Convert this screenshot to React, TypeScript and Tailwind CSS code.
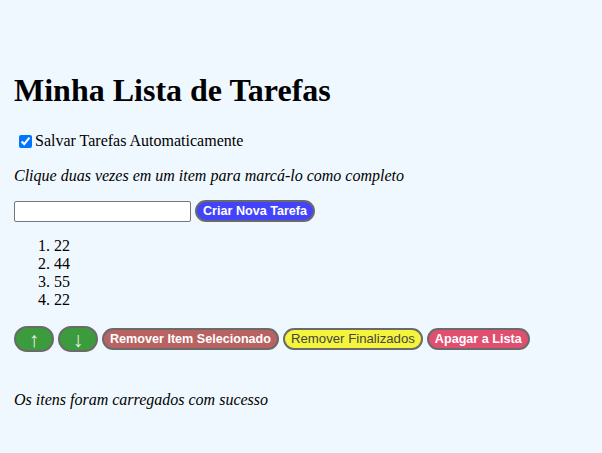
import { useState } from "react";

const items = ["22", "44", "55", "22"];

const btn =
  "rounded-full border-2 border-[#6a6a6a] font-['Liberation_Sans',Arial,sans-serif] leading-none";

export default function App() {
  const [autoSave, setAutoSave] = useState(true);

  return (
    <div className="min-h-[453px] bg-[#f0f8ff] px-[14px] pt-[72px] font-['Liberation_Serif','Times_New_Roman',serif] text-[16px] text-black">
      <h1 className="text-[32px] font-bold leading-[37px]">Minha Lista de Tarefas</h1>

      <label className="mt-[23px] flex items-center gap-[3px] pl-[5px] leading-[18px]">
        <input
          type="checkbox"
          checked={autoSave}
          onChange={(e) => setAutoSave(e.target.checked)}
          className="h-[13px] w-[13px] accent-[#0075ff]"
        />
        <span>Salvar Tarefas Automaticamente</span>
      </label>

      <p className="mt-[17px] italic leading-[18px]">
        Clique duas vezes em um item para marcá-lo como completo
      </p>

      <div className="mt-[15px] flex items-center gap-[4px]">
        <input
          type="text"
          className="h-[21px] w-[177px] rounded-[2px] border border-[#767676] bg-white px-1 text-[13px]"
        />
        <button className={`${btn} h-[22px] bg-[#4343fb] px-[6px] text-[12.6px] font-bold text-white`}>
          Criar Nova Tarefa
        </button>
      </div>

      <ol className="mt-[15px] list-decimal pl-[40px] leading-[18px]">
        {items.map((item, i) => (
          <li key={i}>{item}</li>
        ))}
      </ol>

      <div className="mt-[17px] flex items-center gap-[4px]">
        <button className={`${btn} h-[26px] w-[40px] bg-[#3c9b3c] text-[21px] text-[#ececec]`}>↑</button>
        <button className={`${btn} h-[26px] w-[40px] bg-[#3c9b3c] text-[21px] text-[#ececec]`}>↓</button>
        <button className={`${btn} h-[22px] bg-[#b86262] px-[6px] text-[12.6px] font-bold text-white`}>
          Remover Item Selecionado
        </button>
        <button className={`${btn} h-[22px] bg-[#f4f43c] px-[6px] text-[13.2px] text-[#444]`}>
          Remover Finalizados
        </button>
        <button className={`${btn} h-[22px] bg-[#e04f70] px-[6px] text-[12.6px] font-bold text-white`}>
          Apagar a Lista
        </button>
      </div>

      <p className="mt-[39px] italic leading-[18px]">Os itens foram carregados com sucesso</p>
    </div>
  );
}
